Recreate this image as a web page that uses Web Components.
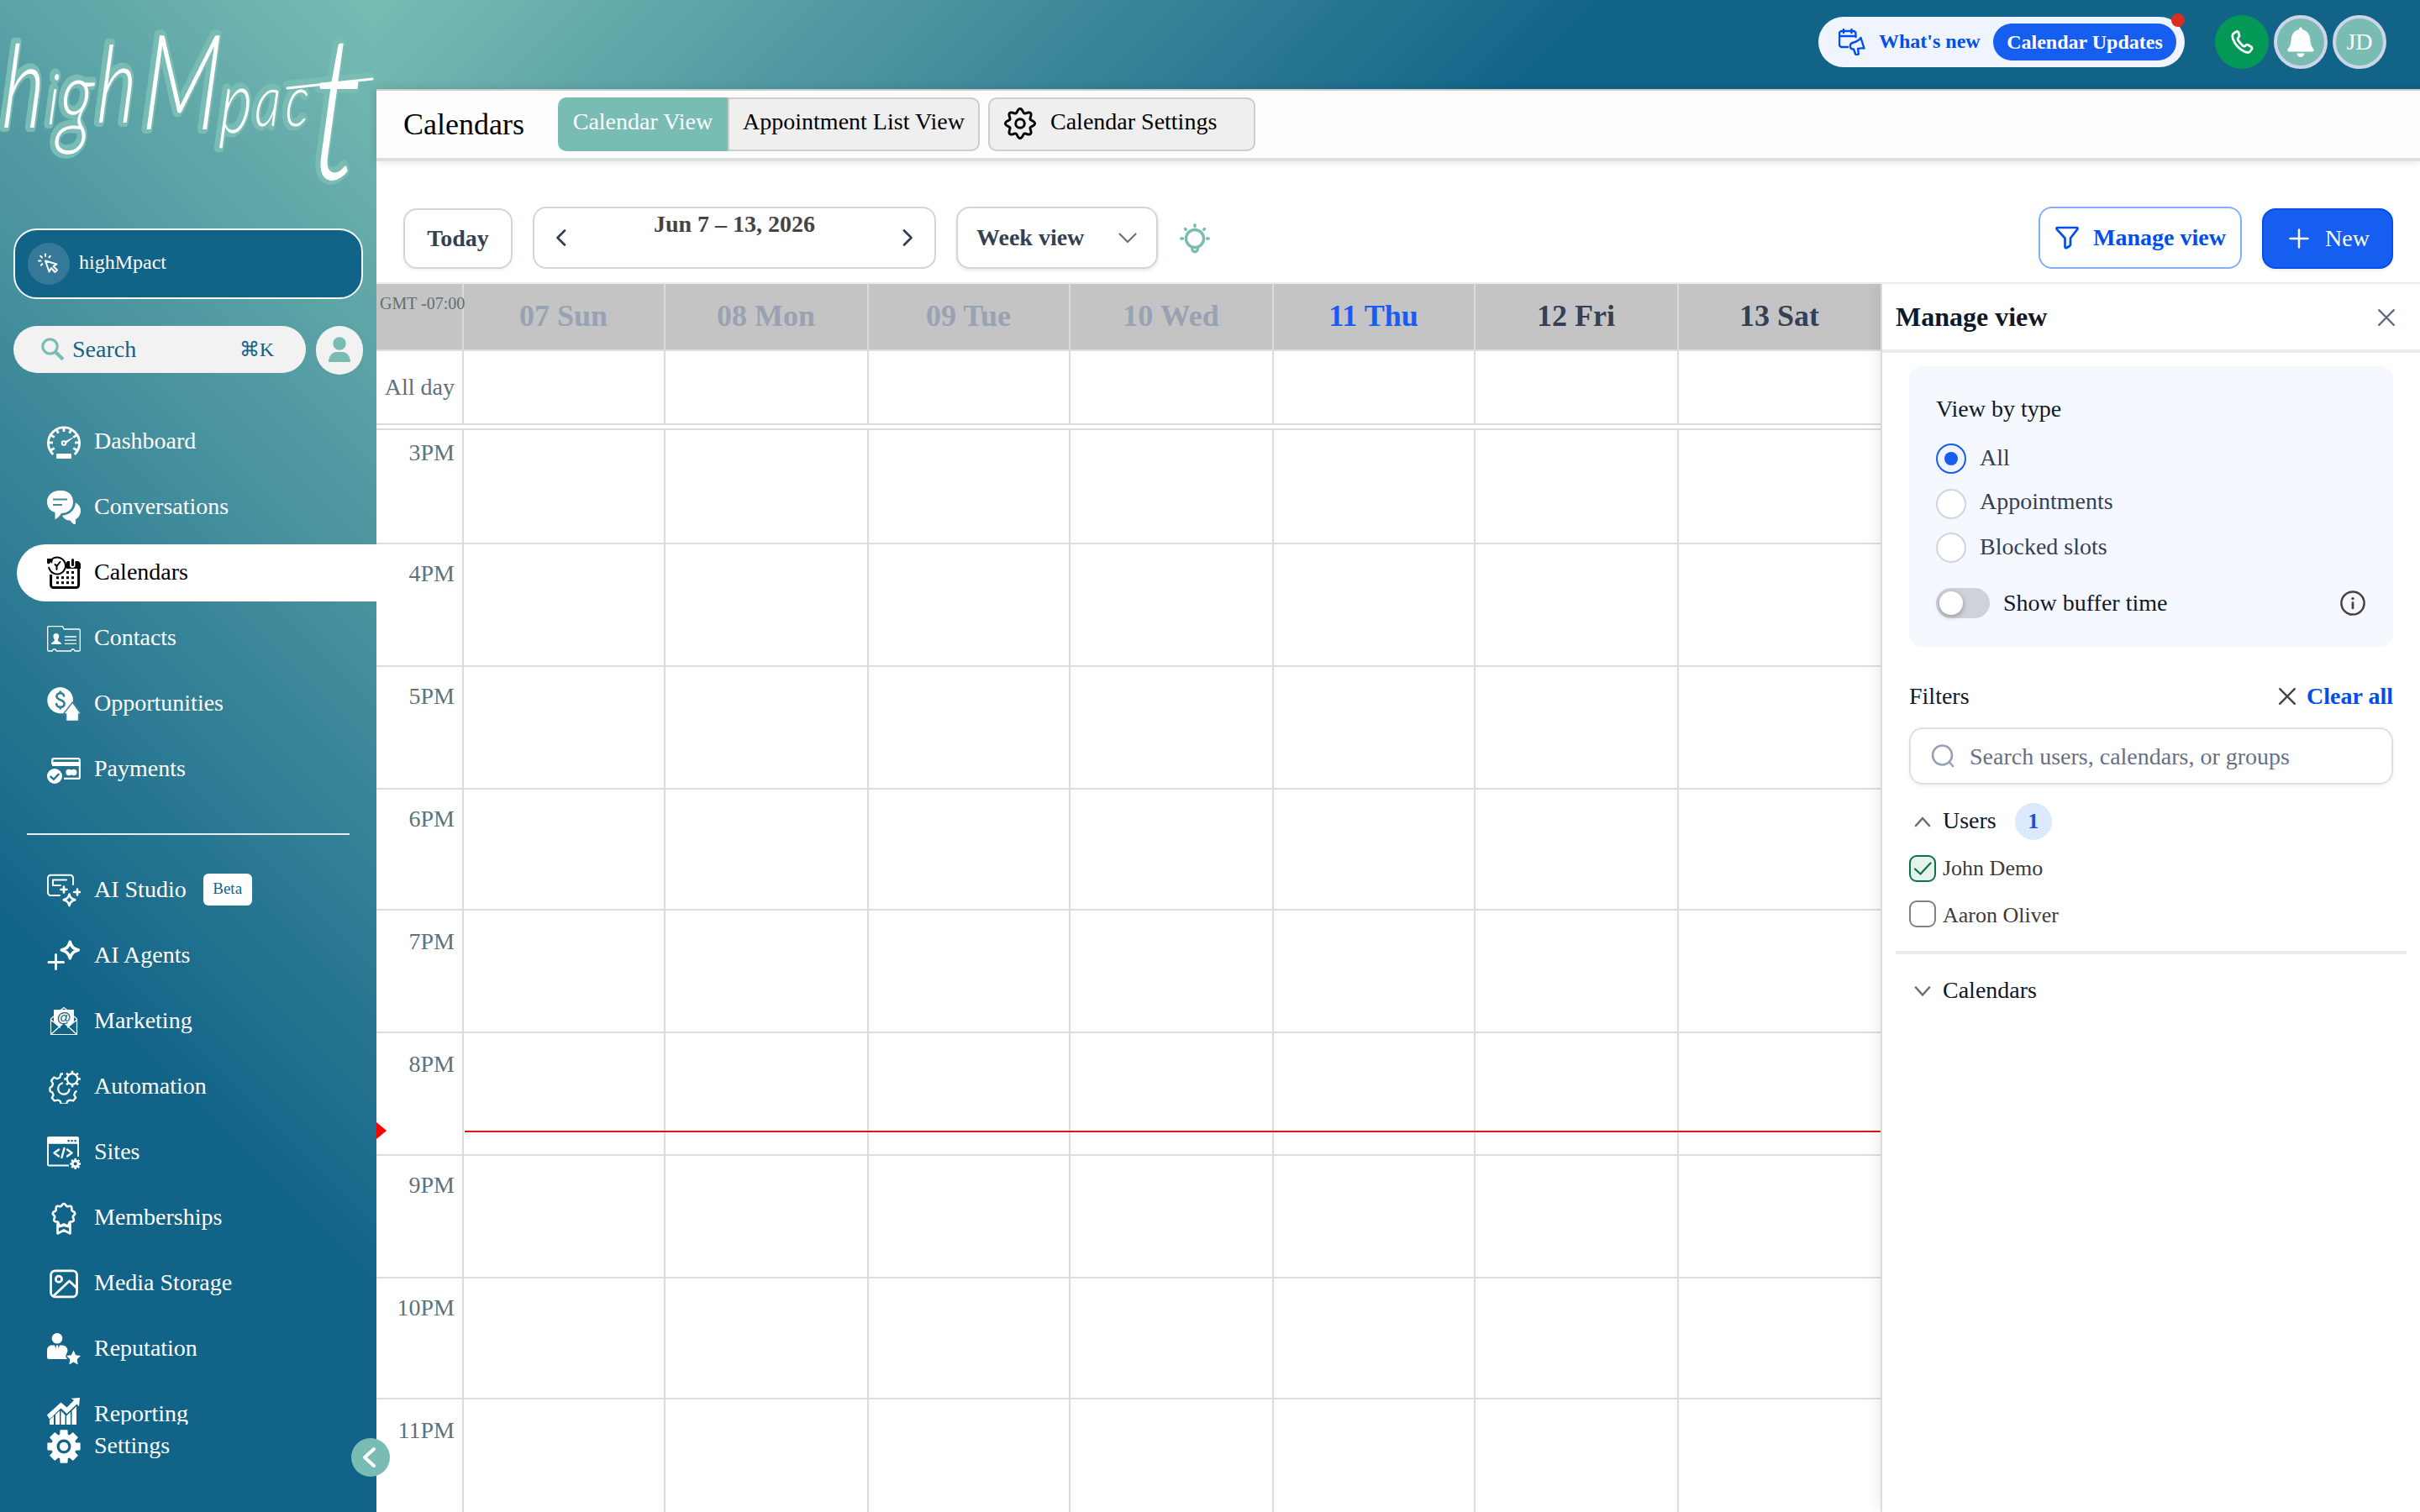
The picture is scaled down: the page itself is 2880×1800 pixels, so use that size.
<!DOCTYPE html>
<html lang="en">
<head>
<meta charset="utf-8">
<title>Calendars</title>
<style>
html,body{margin:0;padding:0;width:2880px;height:1800px;overflow:hidden;background:#fff;font-family:"Liberation Serif","Times New Roman",serif}
</style>
</head>
<body>
<hm-app></hm-app>
<script>
const BASE = `*{box-sizing:border-box}:host{font-size:28px;line-height:31px;white-space:nowrap}svg{display:block}`;
const define = (name, html, attrs) => customElements.define(name, class extends HTMLElement {
  connectedCallback() {
    if (this.shadowRoot) return;
    const root = this.attachShadow({ mode: 'open' });
    root.innerHTML = `<style>${BASE}</style>` + (typeof html === 'function' ? html(this) : html);
  }
});

const gearPath = (cx, cy, ro, ri, n, w = .5) => {
  let d = '';
  for (let i = 0; i < n; i++) {
    const a = i * 2 * Math.PI / n - Math.PI / 2, s = Math.PI / n;
    [[-s * (w + .22), ri], [-s * w, ro], [s * w, ro], [s * (w + .22), ri]].forEach(([o, r], k) => {
      d += (i || k ? 'L' : 'M') + (cx + r * Math.cos(a + o)).toFixed(2) + ' ' + (cy + r * Math.sin(a + o)).toFixed(2);
    });
  }
  return d + 'Z';
};
const wavePath = (cx, cy, r, amp, n) => {
  let d = '';
  for (let i = 0; i < 96; i++) {
    const a = i * Math.PI / 48, q = r + amp * Math.cos(n * a);
    d += (i ? 'L' : 'M') + (cx + q * Math.sin(a)).toFixed(2) + ' ' + (cy - q * Math.cos(a)).toFixed(2);
  }
  return d + 'Z';
};
const ticks = [-120, -90, -60, -30, 0, 30, 60, 90, 120].map(a => `<path d="M20 3v5" transform="rotate(${a} 20 21)"/>`).join('');
const S = (w, extra = '') => `fill="none" stroke="currentColor" stroke-width="${w}" stroke-linecap="round" stroke-linejoin="round" ${extra}`;

const ICONS = {
  dashboard: [40, 40, `<g fill="none" stroke="currentColor" stroke-width="2.800"><path d="M7.200 35A18.600 18.600 0 1 1 32.800 35"/>${ticks}</g><rect x="11" y="34" width="18" height="6" rx="1.200" fill="currentColor"/><path d="M21 19.500L33 13.500 22.500 22.200Z" fill="currentColor"/><circle cx="20" cy="21.500" r="2.300" ${S(2)}/>`],
  conversations: [40, 40, `<path fill="currentColor" d="M15 0h2c8.500 0 14 5.500 14 13.500S25.500 27 17 27c-1.500 2.800-4 5.500-7.500 7.300V26C3.500 24.500 0 19.500 0 13.500 0 5.500 6.500 0 15 0z"/><path fill="currentColor" d="M34 14.500c4 2 6 5.500 6 9.500 0 4.500-2.500 8.500-6 10.300v5.700h-2c-2-1.200-3.500-2.800-4.500-4.500-4 .3-7.500-1.500-9.500-5.700C27 29 33 23.500 34 14.500z"/><path stroke="#3f8a9c" stroke-width="2.200" d="M7 10.500h17M7 17h11"/>`],
  calendars: [40, 40, `<g fill="currentColor"><path d="M22.500 8.500L24 6h3v5c0 4 6.500 4 6.500 0V6h2.500c2 0 4 2 4 4v5H23z"/><rect x="29" y="3" width="3" height="9" rx="1.500"/></g><path fill="none" stroke="currentColor" stroke-width="3" stroke-linejoin="round" d="M4.600 22v12.500a3 3 0 0 0 3 3h27a3 3 0 0 0 3-3V13"/><circle cx="12" cy="11.500" r="10" ${S(2, 'stroke-dasharray="49 6 8 0" transform="rotate(245 12 11.500)"')}/><path fill="currentColor" d="M0 3h7L6 9 4.500 7 2 9.500 0 8.500z"/><path ${S(2)} d="M15.500 7L11.500 12v4M11.500 12L9.500 10"/><g fill="currentColor">${[[23.500,18],[29.500,18],[11.500,24.200],[17.500,24.200],[23.500,24.200],[29.500,24.200],[11.500,30.200],[17.500,30.200],[23.500,30.200],[29.500,30.200]].map(p => `<rect x="${p[0]-.5}" y="${p[1]}" width="3" height="3"/>`).join('')}</g>`],
  contacts: [40, 40, `<g ${S(1.3)}><path d="M6 35H2a1.300 1.300 0 0 1-1.300-1.300V7A1.300 1.300 0 0 1 2 5.700h16.500L20 9h18a1.300 1.300 0 0 1 1.300 1.300v23.400A1.300 1.300 0 0 1 38 35h-5l-1-2h-2.500l-1 2H11l-1-2H7.500z"/><path d="M21.500 18h13M21.500 22.200h13M21.500 26.300h13"/></g><path fill="currentColor" d="M10.800 14c2.400 0 3.600 1.700 3.300 4-.2 1.800-1 3-1.400 4 .3 2 4.300 2 4.300 5H5c0-3 3.700-3 4-5-.6-1-1.300-2.200-1.500-4-.2-2.300.9-4 3.300-4z"/>`],
  opportunities: [40, 40, `<path fill="currentColor" d="M15.700 0a15.700 15.700 0 0 1 15.300 17.300L19.500 31A15.700 15.700 0 1 1 15.700 0z"/><path fill="currentColor" stroke="#3a8799" stroke-width="1.400" d="M30.300 18L40.500 32h-3V40.500H22.700V32H19.500z"/><path fill="none" stroke="#2f7e96" stroke-width="2.600" stroke-linecap="round" d="M20 10.500c0-2-2-3.300-4.200-3.300-2.500 0-4.400 1.500-4.400 3.900 0 5.300 9.200 3 9.200 8.700 0 2.500-2 4-4.800 4s-4.600-1.600-4.600-3.800M15.800 5.500v1.700M15.800 24v1.500"/>`],
  payments: [40, 40, `<path fill="none" stroke="currentColor" stroke-width="2.200" d="M6.200 14V9.200a2 2 0 0 1 2-2h29a1.700 1.700 0 0 1 1.700 1.700v20.300a1.700 1.700 0 0 1-1.700 1.700H20"/><path fill="currentColor" d="M6 11h33v5H6z"/><circle cx="9" cy="28" r="9" fill="currentColor"/><path fill="none" stroke="#2a7791" stroke-width="2.400" d="M3.700 28l4.200 3.800 6.400-6.600"/><circle cx="26" cy="23.500" r="3.700" fill="currentColor"/><circle cx="31.700" cy="23.500" r="3.700" fill="currentColor"/>`],
  studio: [40, 40, `<g ${S(2)}><path d="M15 26H4.500A3.500 3.500 0 0 1 1 22.500V5.200A3.500 3.500 0 0 1 4.500 1.700h23A3.500 3.500 0 0 1 31 5.200V13"/><path d="M23 7.500H7V14h9"/></g><g ${S(2.600)}><path d="M20 15.500v7M16.500 19h7M36 18.500v7M32 22h7"/><path d="M26.500 24.500c1.200 4.300 2.600 5.500 6.800 6.800-4.200 1.200-5.600 2.500-6.800 6.800-1.200-4.300-2.600-5.500-6.800-6.800 4.200-1.300 5.600-2.500 6.800-6.800z"/></g>`],
  agents: [40, 40, `<g ${S(3)}><path d="M10.500 18.500v17M2 27.500h17.500"/></g><path ${S(3.600)} d="M27.300 3.300c1.800 6 4 8.300 10 9.700-6 1.600-8.200 3.800-10 9.800-1.800-6-4-8.200-10-9.800 6-1.400 8.200-3.700 10-9.700z"/>`],
  marketing: [40, 40, `<path ${S(1.200)} d="M4.500 17v18.500h31V17L32 14M4.500 17L8 14M15.500 7l4.500-3.500L24.500 7M4.500 18l11 9M35.500 18l-11 9M4.500 35.500L20 21.500l15.500 14"/><path fill="currentColor" d="M8 6h24v14l-6.500 6L20 21l-5.500 5L8 20z"/><text x="20" y="21" font-family="Liberation Sans" font-size="17" font-weight="bold" text-anchor="middle" fill="#156689">@</text>`],
  automation: [40, 40, `<path fill="none" stroke="currentColor" stroke-width="2.300" stroke-linejoin="round" d="M19 4.500h-2.500l-1.200 4.300-3.300 1.400-3.700-1.700-3.300 4 2 3.500-1 3.200L3.500 21v4l3 1.700 1.100 3.200-1.800 3 3 3.600 4-1 3 1.600.8 3.200h6.500l1-3.200 3-1.500 4 .9 3-3.800-1.900-3.200 1-3 2.300-1.800"/><path ${S(2.300)} d="M18 15.500A6.700 6.700 0 1 0 26.500 23"/><circle cx="30" cy="10.500" r="6.300" ${S(2.300)}/>${[0,45,90,135,180,225,270,315].map(a => `<path d="M30 4V0.700" stroke="currentColor" stroke-width="2.600" transform="rotate(${a} 30 10.500)"/>`).join('')}`],
  sites: [40, 40, `<path fill="none" stroke="currentColor" stroke-width="2" d="M37 25V3.200A1.200 1.200 0 0 0 35.800 2H2.200A1.200 1.200 0 0 0 1 3.200v31A1.200 1.200 0 0 0 2.200 35.500H26"/><path fill="currentColor" fill-rule="evenodd" d="M1 2h36v7.700H1zM24.500 5h2.200v2.200h-2.200zM28.500 5h2.200v2.200h-2.200zM32.500 5h2.200v2.200h-2.200z"/><path ${S(2.400)} d="M14 16.500l-5.500 4 5.500 4M24 16.500l5.500 4-5.500 4M20.500 15l-3 11"/><path fill="currentColor" fill-rule="evenodd" d="${gearPath(33.700, 33.500, 6.500, 4.800, 8)}M31.700 33.500a2 2 0 1 0 4 0a2 2 0 1 0-4 0z"/>`],
  memberships: [40, 40, `<path ${S(2.600)} d="${wavePath(20, 16.500, 12.200, 1.200, 9)}"/><path ${S(2.600)} d="M12.500 27v11.500l7.500-4 7.500 4V27M13.500 30.500l6.500-1.800 6.500 1.800"/>`],
  media: [40, 40, `<g ${S(2.800)}><rect x="4.500" y="4.800" width="31" height="31" rx="5"/><circle cx="14" cy="14.800" r="3.600"/><path d="M8 34.500L26.500 17l9 8.500"/></g>`],
  reputation: [40, 40, `<circle cx="12" cy="7.200" r="6.300" fill="currentColor"/><path fill="currentColor" d="M6 15.500h3l3 9 3-9h3c4 0 6.500 3 6.500 7l-2.500 6 2 3.500H2.500A2.500 2.500 0 0 1 0 29.500V22c0-4 2-6.500 6-6.500z"/><path fill="currentColor" d="M11 15.500h2.200l.8 6-2 4-2-4z"/><path fill="currentColor" d="M31.500 21.500l2.700 5.700 5.800.8-4.300 4.300 1 6.200-5.200-3-5.200 3 1-6.200L23 28l5.800-.8z"/>`],
  reporting: [40, 40, `<path fill="currentColor" d="M0 20.500L16.500 5.500l7 6L32 3 28.500.7 39 0 38 10.500l-2.500-3L23.500 19l-7-6.500L3 25.500z"/><path fill="currentColor" d="M3 26.500L8 21.500V40H3zM10 20l5-4.500V40h-5zM16.500 15.500l5 5V40h-5zM23 21.500l5-4.500V40h-5zM29.500 15.500L35 10V40h-5.500z"/>`],
  settings: [40, 40, `<path fill="currentColor" fill-rule="evenodd" stroke="currentColor" stroke-width="1.600" stroke-linejoin="round" d="${gearPath(20, 20, 19.200, 14.200, 8, .5)}M10.700 20a9.300 9.300 0 1 0 18.600 0a9.300 9.300 0 1 0-18.600 0z"/><circle cx="20" cy="20" r="5.200" fill="currentColor"/>`],
  click: [26, 26, `<g ${S(2)}><path d="M9 9.500l4.500 13 2.500-4.500 4.500 5 2.500-2.500-4.500-4.500 4-2.500z"/><path d="M9 1.500v2.500M1 9.500h2.500M3.200 3.800l1.800 1.800M14.800 3.800L13.500 5.200M3.800 14.800l1.500-1.500"/></g>`],
  find: [28, 28, `<circle cx="10.500" cy="10.500" r="8.700" fill="none" stroke="currentColor" stroke-width="3.200"/><path d="M17 17l9 8.700" stroke="currentColor" stroke-width="4.200"/>`],
  person: [28, 32, `<circle cx="14" cy="8" r="7.800" fill="currentColor"/><path fill="currentColor" d="M1 30c0-7.500 4.500-12 10-12h6c5.500 0 10 4.500 10 12z"/>`],
  left: [46, 46, `<path ${S(4)} d="M27 13L16 23l11 10"/>`],
  whatsnew: [32, 32, `<g ${S(2.400)}><path d="M11 22H4a3 3 0 0 1-3-3V6a3 3 0 0 1 3-3h13.500a3 3 0 0 1 3 3v4M1.200 9h19M6 1v4M15.500 1v4"/><path d="M26.500 11l4 12.500M26.500 11c-2.500 3.500-5 4.500-8.500 5.500-6 1.500-5 8 0 8l2 5.500c1 2 4.300 1 3.800-1L23 24c2.500-.8 5-.8 7.500-.5"/></g>`],
  phone: [32, 32, `<path ${S(2.800)} d="M9 5L6.500 6.500C2.500 9 6.500 18 11 22.500s11.500 9 14.500 6l2-2.500c1-1.300.7-2.500-.5-3.300l-3.500-2.200c-1.300-.8-2.200-.4-3 .6-1.200 1.400-2 1.400-3.500.2-2.500-2-4-4-5.500-6.500-1-1.700-.6-2.400.5-3.300 1-.9 1.300-2 .6-3.200L12 5.500C11.200 4.300 10.200 4.200 9 5z" transform="translate(0 -1)"/>`],
  bell: [32, 36, `<path fill="currentColor" d="M16 .5c1.500 0 2 1 2 2.600 6 1.500 8.700 6 9.300 12 .5 6 1.500 8 4 11.400.8 1.300.3 3-1.300 3H2c-1.600 0-2.100-1.700-1.300-3 2.500-3.400 3.500-5.400 4-11.400.6-6 3.300-10.500 9.300-12 0-1.600.5-2.600 2-2.600z"/><path fill="currentColor" d="M11.500 31.500h9c-.5 2.800-2 4.500-4.500 4.500s-4-1.700-4.500-4.500z"/>`],
  cog: [40, 40, `<path ${S(2.900)} d="${wavePath(20, 20, 15.300, 2.300, 8)}"/><circle cx="20" cy="20" r="5.300" ${S(2.900)}/>`],
  prev: [20, 24, `<path ${S(2.800)} d="M14 3.500L5.500 12l8.500 8.500"/>`],
  next: [20, 24, `<path ${S(2.800)} d="M6 3.500l8.500 8.500L6 20.500"/>`],
  down: [24, 16, `<path ${S(2.200)} d="M2.500 3.500L12 13l9.500-9.500"/>`],
  bulb: [36, 36, `<g ${S(3.400)}><circle cx="18" cy="18" r="10.500"/><path d="M14.800 28.500v2a3.200 3.200 0 0 0 6.400 0v-2M18 1.700v1.800M6.500 6.500l.8.800M29.500 6.500l-.8.800M1.700 18h1.800M32.500 18h1.800"/></g>`],
  funnel: [30, 30, `<path ${S(2.700)} d="M3.500 3h23c1 0 1.300 1 .8 1.800L19 15.500V23c0 1-.5 1.600-1.200 2l-3.300 2c-1 .5-2 0-2-1.200V15.500L2.700 4.800C2.200 4 2.500 3 3.500 3z"/>`],
  plus: [26, 26, `<path ${S(2.500)} d="M13 2.500v21M2.500 13h21"/>`],
  close: [24, 24, `<path ${S(2.400)} d="M3.200 3.200l17.600 17.600M20.800 3.200L3.200 20.800"/>`],
  info: [32, 32, `<circle cx="16" cy="16" r="13.600" ${S(2.500)}/><path ${S(2.700)} d="M16 15.500v6.500"/><circle cx="16" cy="10.600" r="1.700" fill="currentColor"/>`],
  lens: [28, 28, `<circle cx="13.500" cy="13" r="11.500" ${S(2.600)}/><path ${S(2.600)} d="M22 21.500l4 4.500"/>`],
  chevup: [20, 14, `<path ${S(2.600)} d="M2 12l8-9 8 9"/>`],
  chevdown: [20, 14, `<path ${S(2.600)} d="M2 2.500l8 9 8-9"/>`],
  tick: [24, 24, `<path ${S(2.200)} d="M3 12.500l6.500 6L21.500 5.500"/>`]
};
define('hm-icon', el => {
  const [w, h, body] = ICONS[el.getAttribute('name')];
  return `<style>:host{display:block;flex:none;width:${w}px;height:${h}px}</style><svg width="${w}" height="${h}" viewBox="0 0 ${w} ${h}">${body}</svg>`;
});

define('hm-logo', `
<style>:host{display:block;height:272px}text{font-family:Lato,sans-serif;font-style:italic;font-weight:300}</style>
<svg width="448" height="272" viewBox="0 0 448 272" overflow="visible">
  <defs><g id="mark">
    <text y="152" font-size="138" transform="translate(0 150) skewX(-3) scale(.7 1) translate(0 -150)"><tspan x="2">h</tspan><tspan x="80" y="148" font-size="84">i</tspan><tspan x="98" y="160" font-size="128">g</tspan><tspan x="163" y="146" font-size="128">h</tspan><tspan x="240" y="154" font-size="158">M</tspan><tspan x="373" y="158" font-size="104">p</tspan><tspan x="432" y="150" font-size="86">a</tspan><tspan x="484" y="150" font-size="86">c</tspan><tspan x="530" y="213" font-size="240">t</tspan></text>
  </g></defs>
  <use href="#mark" fill="#79bcb3" stroke="#79bcb3" stroke-width="12" stroke-linejoin="round" transform="translate(-2 -1)"/>
  <path d="M342 101L441 91" stroke="#79bcb3" stroke-width="10" stroke-linecap="round"/>
  <use href="#mark" fill="#fff"/>
  <path d="M342 105L443 94" stroke="#fff" stroke-width="3" stroke-linecap="round"/>
</svg>`);

define('hm-nav-item', el => `
<style>
:host{display:flex;flex:none;align-items:center;height:68px;margin-left:20px;padding-left:36px;color:#fff;border-radius:34px 0 0 34px}
:host([active]){background:#fff;color:#000}
:host([short]){height:52px}
.l{margin-left:16px;padding-bottom:3px}
.b{margin-left:20px;height:38px;width:58px;border-radius:6px;background:#fff;color:#116388;font-size:19px;line-height:22px;text-align:center;padding-top:7px;margin-bottom:2px}
</style>
<hm-icon name="${el.getAttribute('icon')}"></hm-icon><span class="l"><slot></slot></span>${el.hasAttribute('badge') ? `<span class="b">${el.getAttribute('badge')}</span>` : ''}`);

const item = (icon, label, extra = '') => `<hm-nav-item icon="${icon}" ${extra}>${label}</hm-nav-item>`;
define('hm-sidebar', `
<style>
:host{display:flex;flex-direction:column;width:448px;height:1800px;background:linear-gradient(225deg,#79bcb3 0%,#116388 69%)}
.loc{margin:0 16px;height:84px;border:2px solid #f4f6f7;border-radius:28px;background:#116388;display:flex;align-items:center;padding-left:15px;color:#fff;font-size:24px;line-height:26px}
.loc i{width:50px;height:50px;border-radius:50%;background:#36789a;display:grid;place-items:center;margin-right:11px}
.loc span{padding-bottom:4px}
.s{display:flex;gap:12px;margin:32px 16px 46px}
.q{width:348px;height:56px;border-radius:28px;background:#f2f2f2;color:#116388;display:flex;align-items:center;padding:0 38px 0 33px}
.q hm-icon,.av{color:#79bcb3}.q b{font-weight:400;flex:1;margin-left:9px;padding-bottom:2px}.q em{font-style:normal;font-size:24px}
.av{width:56px;height:58px;border-radius:28px;background:#f2f2f2;display:grid;place-items:center}
.n{display:flex;flex-direction:column;gap:10px;height:1204px;overflow:hidden}
hr{flex:none;border:0;margin:32px 32px 22px;height:2px;background:#e6eef1}
</style>
<hm-logo></hm-logo>
<div class="loc"><i><hm-icon name="click"></hm-icon></i><span>highMpact</span></div>
<div class="s"><div class="q"><hm-icon name="find"></hm-icon><b>Search</b><em>⌘K</em></div><div class="av"><hm-icon name="person"></hm-icon></div></div>
<div class="n">
${item('dashboard','Dashboard')}${item('conversations','Conversations')}${item('calendars','Calendars','active')}${item('contacts','Contacts')}${item('opportunities','Opportunities')}${item('payments','Payments')}
<hr>
${item('studio','AI Studio','badge="Beta"')}${item('agents','AI Agents')}${item('marketing','Marketing')}${item('automation','Automation')}${item('sites','Sites')}${item('memberships','Memberships')}${item('media','Media Storage')}${item('reputation','Reputation')}${item('reporting','Reporting')}
</div>
${item('settings','Settings','short')}`);

define('hm-topbar', `
<style>
:host{display:flex;height:106px;padding:16px 40px 0 0;justify-content:flex-end;background:linear-gradient(135deg,#79bcb3 0%,#116388 58%)}
.p{position:relative;width:436px;height:60px;margin:4px 36px 0 0;border-radius:30px;background:#eff4ff;color:#004eeb;display:flex;align-items:center;padding-left:24px;font-weight:bold;font-size:24px;line-height:26px}
.p span{margin-left:16px;padding-bottom:3px}
.u{margin-left:auto;margin-right:10px;width:218px;height:44px;padding-top:9px;border-radius:22px;background:#155eef;color:#fff;text-align:center}
.d{position:absolute;right:0;top:-4px;width:16px;height:16px;border-radius:50%;background:#d92d20}
.c{width:64px;height:64px;margin:2px 0 0 6px;border-radius:50%;background:#79bcb3;border:4px solid #cdd5e7;display:grid;place-items:center;color:#fff}
.c.g{margin-left:0;background:#039855;border:0}
.c b{font-weight:400;padding-bottom:2px}
</style>
<div class="p"><hm-icon name="whatsnew"></hm-icon><span>What's new</span><div class="u">Calendar Updates</div><div class="d"></div></div>
<div class="c g"><hm-icon name="phone"></hm-icon></div><div class="c"><hm-icon name="bell"></hm-icon></div><div class="c"><b>JD</b></div>`);

define('hm-tabbar', `
<style>
:host{position:relative;display:flex;height:86px;background:#fdfdfd;border-top:2px solid #ccc;border-bottom:4px solid #dedede;padding:8px 0 0 32px;box-shadow:0 0 10px rgba(0,0,0,.14);color:#000}
h1{margin:12px 0 0;font-weight:400;font-size:36px;line-height:40px;width:184px}
.t{height:64px;padding-top:13px;text-align:center}
.a{width:202px;background:#79bcb3;color:#fff;border-radius:10px 0 0 10px}
.b{width:300px;background:#efefef;border:2px solid #ccc;padding-top:11px;border-radius:0 10px 10px 0}
.c{width:318px;margin-left:10px;background:#efefef;border:2px solid #ccc;border-radius:10px;display:flex;padding:9px 0 0 16px}
.c span{margin:2px 0 0 16px}
</style>
<h1>Calendars</h1><div class="t a">Calendar View</div><div class="t b">Appointment List View</div><div class="t c"><hm-icon name="cog"></hm-icon><span>Calendar Settings</span></div>`);

define('hm-toolbar', `
<style>
:host{display:flex;height:146px;background:#fff;border-bottom:2px solid #eaecf0;padding:0 32px 16px;align-items:flex-end;gap:24px;font-weight:bold;color:#344054}
div{height:74px;border:2px solid #d0d5dd;border-radius:16px;display:flex;align-items:center;background:#fff}
.t{height:72px;width:130px;justify-content:center;box-shadow:0 2px 4px rgba(16,24,40,.06)}
.d{width:480px;padding:0 22px;justify-content:space-between}
.d span{align-self:flex-start;margin-top:3px;color:#444}
.w{width:240px;padding:0 22px;justify-content:space-between;box-shadow:0 2px 4px rgba(16,24,40,.1)}
.w hm-icon{color:#667085}.t span,.w span{padding-bottom:2px}
.bulb{color:#79bcb3;margin:0 auto 18px 2px}
.m{width:242px;border-color:#84adff;color:#004eeb;padding-left:17px}
.m span{margin-left:16px;padding-bottom:1px}
.n{height:72px;width:156px;background:#155eef;border-color:#004eeb;color:#fff;font-weight:400;padding-left:29px;box-shadow:0 2px 4px rgba(16,24,40,.08)}
.n span{margin-left:18px;padding-bottom:2px}
</style>
<div class="t"><span>Today</span></div>
<div class="d"><hm-icon name="prev"></hm-icon><span>Jun 7 – 13, 2026</span><hm-icon name="next"></hm-icon></div>
<div class="w"><span>Week view</span><hm-icon name="down"></hm-icon></div>
<hm-icon class="bulb" name="bulb"></hm-icon>
<div class="m"><hm-icon name="funnel"></hm-icon><span>Manage view</span></div>
<div class="n"><hm-icon name="plus"></hm-icon><span>New</span></div>`);

const cells = '<i></i>'.repeat(7);
const rowClass = { 3: 'f', 6: 'k', 7: 'o', 8: 'o', 10: 'k', 11: 'o' };
define('hm-calendar', `
<style>
:host{position:relative;display:block;width:1790px;height:1462px;overflow:hidden;background:#fff;color:#607179}
.r{display:grid;grid-template-columns:104px 240px 242px 240px 242px 240px 242px 242px;border-bottom:2px solid #dcdcdc}
.r>*{border-right:2px solid #dcdcdc}
.h{height:80px;background:#c4c4c4;font-weight:bold;font-size:36px;line-height:40px;text-align:center;color:#98a2b3}
.h b{padding:18px 1px 0 0}
.h .g{font-weight:400;font-size:20px;line-height:22px;text-align:left;padding:12px 0 0 4px;color:#5f6f76}
.h .today{color:#155eef}.h .next{color:#344054}
.a{height:88px;text-align:right}.a span{padding:27px 9px 0 0}
.body{margin-top:4px;border-top:2px solid #dcdcdc}
.s{height:146px;text-align:right}.s span{padding:19px 9px 0 0}
.s.k{height:144px}.s.f{height:136px}.s.f span{padding-top:11px}.s.o span{padding-top:21px}
.now{position:absolute;left:105px;right:0;top:1008px;height:2px;background:#e01414}
.arr{position:absolute;left:0;top:998px;border:solid transparent;border-width:10px 0 10px 12px;border-left-color:#f00}
</style>
<div class="r h"><span class="g">GMT -07:00</span><b>07 Sun</b><b>08 Mon</b><b>09 Tue</b><b>10 Wed</b><b class="today">11 Thu</b><b class="next">12 Fri</b><b class="next">13 Sat</b></div>
<div class="r a"><span>All day</span>${cells}</div>
<div class="body">${[3,4,5,6,7,8,9,10,11].map(n => `<div class="r s ${rowClass[n] || ''}"><span>${n}PM</span>${cells}</div>`).join('')}</div>
<div class="now"></div><div class="arr"></div>`);

define('hm-radio', `
<style>
:host{display:flex;align-items:flex-start;height:36px;color:#344054}
i{width:36px;height:36px;border-radius:50%;border:2px solid #d0d5dd;background:#fff;margin-right:16px;display:grid;place-items:center}
:host([checked]) i{border-color:#155eef;background:#eff4ff}
:host([checked]) i::after{content:"";width:16px;height:16px;border-radius:50%;background:#155eef}
span{margin-top:var(--t,1px)}
</style><i></i><span><slot></slot></span>`);

define('hm-check', el => `
<style>
:host{display:flex;height:32px;color:#3b3b3b;font-size:26px;line-height:29px}
i{width:32px;height:32px;border-radius:9px;border:2px solid #808080;background:#fff;margin-right:8px;display:grid;place-items:center}
:host([checked]) i{border-color:#087443;background:#e6f2ec;color:#087443}
span{margin-top:var(--t,1px)}
</style><i>${el.hasAttribute('checked') ? '<hm-icon name="tick"></hm-icon>' : ''}</i><span><slot></slot></span>`);

define('hm-panel', `
<style>
:host{position:relative;display:block;width:642px;height:1462px;background:#fff;border-left:2px solid #dcdcdc;box-shadow:-4px 0 16px rgba(0,0,0,.07);clip-path:inset(0 0 0 -30px);color:#101828}
.h{height:82px;border-bottom:4px solid #eaecf0;display:flex;justify-content:space-between;padding:21px 28px 0 16px;font-weight:bold;font-size:32px;line-height:36px}
.h hm-icon{color:#667085;margin-top:7px}
.box{margin:16px 32px 0;height:334px;background:#f5f8ff;border-radius:16px;padding:35px 32px 0}
.box hm-radio:nth-of-type(1){margin-top:26px;--t:1px}
.box hm-radio:nth-of-type(2){margin-top:18px;--t:-1px}
.box hm-radio:nth-of-type(3){margin-top:16px;--t:1px}
.bt{display:flex;align-items:center;height:36px;margin-top:30px}
.tg{width:64px;height:36px;border-radius:18px;background:#d0d2d9;padding:4px;margin-right:16px}
.tg::before{content:"";display:block;width:28px;height:28px;border-radius:50%;background:#fff;box-shadow:0 2px 6px rgba(0,0,0,.3)}
.bt span{flex:1;padding-bottom:2px}.bt hm-icon{color:#444}
.f{display:flex;align-items:center;margin:43px 32px 0;height:31px}
.f hm-icon{margin:0 11px 0 auto;color:#444}.f b{color:#004eeb}
.in{margin:22px 32px 0;height:68px;border:2px solid #dcdfe6;border-radius:16px;box-shadow:0 2px 4px rgba(16,24,40,.06);display:flex;align-items:center;padding-left:24px;color:#667085}
.in hm-icon{color:#98a2b3;margin-right:18px}
.g{display:flex;align-items:center;padding-left:38px;height:44px;margin-top:22px}
.g hm-icon{color:#667085;margin-right:14px}
.g b{width:44px;height:44px;border-radius:50%;background:#dbeafe;color:#1d4ed8;font-size:26px;line-height:29px;text-align:center;padding-top:7px;margin-left:22px}
.g span{padding-bottom:3px}
hm-check{margin:18px 32px 0}hm-check+hm-check{margin-top:22px;--t:3px}
hr{border:0;height:4px;background:#eaecf0;margin:28px 16px 0}
hr+.g{margin-top:22px}
</style>
<div class="h"><span>Manage view</span><hm-icon name="close"></hm-icon></div>
<div class="box"><div>View by type</div><hm-radio checked>All</hm-radio><hm-radio>Appointments</hm-radio><hm-radio>Blocked slots</hm-radio>
<div class="bt"><i class="tg"></i><span>Show buffer time</span><hm-icon name="info"></hm-icon></div></div>
<div class="f"><span>Filters</span><hm-icon name="close"></hm-icon><b>Clear all</b></div>
<div class="in"><hm-icon name="lens"></hm-icon><span>Search users, calendars, or groups</span></div>
<div class="g"><hm-icon name="chevup"></hm-icon><span>Users</span><b>1</b></div>
<hm-check checked>John Demo</hm-check><hm-check>Aaron Oliver</hm-check>
<hr>
<div class="g"><hm-icon name="chevdown"></hm-icon><span>Calendars</span></div>`);

define('hm-app', `
<style>
:host{position:relative;display:flex;width:2880px;height:1800px;overflow:hidden}
main{width:2432px}
.body{display:flex}
.fold{position:absolute;left:418px;top:1712px;width:46px;height:46px;border-radius:50%;background:#79bcb3;color:#fff}
</style>
<hm-sidebar></hm-sidebar>
<main><hm-topbar></hm-topbar><hm-tabbar></hm-tabbar><hm-toolbar></hm-toolbar><div class="body"><hm-calendar></hm-calendar><hm-panel></hm-panel></div></main>
<div class="fold"><hm-icon name="left"></hm-icon></div>`);
</script>
</body>
</html>
